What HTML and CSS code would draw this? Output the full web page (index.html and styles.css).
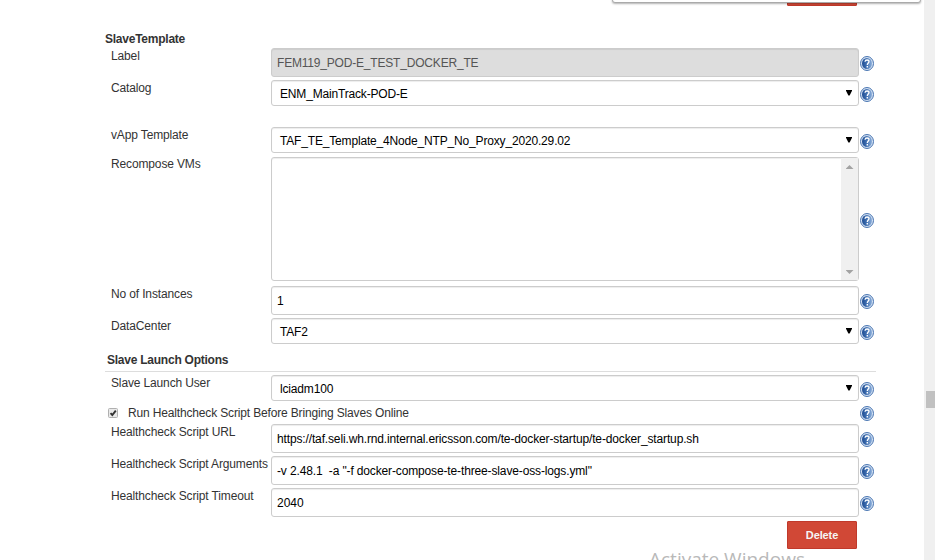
FILE: index.html
```html
<!DOCTYPE html>
<html lang="en">
<head>
<meta charset="utf-8">
<title>Slave Template</title>
<link rel="stylesheet" href="styles.css">
</head>
<body>
<svg class="defs" width="0" height="0" aria-hidden="true">
  <defs>
    <linearGradient id="disc" x1="0" y1="0" x2="1" y2="0">
      <stop offset="0" stop-color="#1d4c93"/>
      <stop offset="0.4" stop-color="#3b6bad"/>
      <stop offset="1" stop-color="#8db0dc"/>
    </linearGradient>
    <symbol id="help" viewBox="0 0 14 15">
      <ellipse cx="7" cy="7.5" rx="6.5" ry="7" fill="#d3e0f1" stroke="#4a76b2" stroke-width="1"/>
      <ellipse cx="7" cy="7.5" rx="5" ry="5.500" fill="url(#disc)"/>
      <path d="M5 5.700C5.100 4.500 5.900 4 7 4c1.200 0 2 .6 2 1.600C9 6.900 7.300 7.200 7.300 9" fill="none" stroke="#fff" stroke-width="1.300"/>
      <rect x="6.600" y="10" width="1.400" height="1.500" fill="#fff"/>
    </symbol>
  </defs>
</svg>
<div class="page">
  <main class="form">
    <button class="btn btn-prev" aria-label="Delete previous"></button>
    <h2 class="title">SlaveTemplate</h2>
    <div class="row tall"><label>Label</label><div class="field disabled">FEM119_POD-E_TEST_DOCKER_TE</div><svg class="help"><use href="#help"/></svg></div>
    <div class="row catalog"><label>Catalog</label><div class="field select"><span>ENM_MainTrack-POD-E</span><i class="arrow"></i></div><svg class="help"><use href="#help"/></svg></div>
    <div class="row vapp"><label>vApp Template</label><div class="field select"><span>TAF_TE_Template_4Node_NTP_No_Proxy_2020.29.02</span><i class="arrow"></i></div><svg class="help"><use href="#help"/></svg></div>
    <div class="row list"><label>Recompose VMs</label><div class="field listbox"><div class="track"><i class="up"></i><i class="down"></i></div></div><svg class="help"><use href="#help"/></svg></div>
    <div class="row tall"><label>No of Instances</label><div class="field">1</div><svg class="help"><use href="#help"/></svg></div>
    <div class="row"><label>DataCenter</label><div class="field select"><span>TAF2</span><i class="arrow"></i></div><svg class="help"><use href="#help"/></svg></div>
    <h2 class="section">Slave Launch Options</h2>
    <div class="row user"><label>Slave Launch User</label><div class="field select"><span>lciadm100</span><i class="arrow"></i></div><svg class="help"><use href="#help"/></svg></div>
    <div class="check-row">
      <svg class="check" viewBox="0 0 10 10"><rect x="0.500" y="0.500" width="9" height="9" rx="1" fill="#e9e9e9" stroke="#b0b0b0"/><path d="M2.500 5.200 4.300 7 7.800 2.600" fill="none" stroke="#333" stroke-width="1.900"/></svg>
      <span class="check-text">Run Healthcheck Script Before Bringing Slaves Online</span>
      <svg class="help"><use href="#help"/></svg>
    </div>
    <div class="row tall"><label>Healthcheck Script URL</label><div class="field">https://taf.seli.wh.rnd.internal.ericsson.com/te-docker-startup/te-docker_startup.sh</div><svg class="help"><use href="#help"/></svg></div>
    <div class="row tall"><label>Healthcheck Script Arguments</label><div class="field">-v 2.48.1  -a "-f docker-compose-te-three-slave-oss-logs.yml"</div><svg class="help"><use href="#help"/></svg></div>
    <div class="row tall"><label>Healthcheck Script Timeout</label><div class="field number">2040</div><svg class="help"><use href="#help"/></svg></div>
    <button class="btn">Delete</button>
  </main>
  <aside class="scrollbar"><div class="thumb"></div></aside>
  <div class="panel-edge"></div>
  <div class="watermark">Activate Windows</div>
</div>
</body>
</html>
```
FILE: styles.css
```css
* { box-sizing: border-box; }
body {
  margin: 0;
  background: #fff;
  color: #333;
  font: 12px/16px "Liberation Sans", Arial, sans-serif;
  letter-spacing: -0.14px;
}
.defs { position: absolute; }
.page {
  position: relative;
  display: flex;
  justify-content: space-between;
  width: 935px;
  height: 560px;
  overflow: hidden;
}
.form {
  display: flex;
  flex-direction: column;
  width: 771px;
  margin-left: 105px;
}
h2 { margin: 0; font-size: 12px; line-height: 16px; letter-spacing: -0.24px; }
.title { margin: 25px 0 1px; }
.section {
  height: 20px;
  margin: 5px 0 3px;
  padding-left: 2px;
  border-bottom: 1px solid #ddd;
}
.row {
  display: grid;
  grid-template-columns: 166px 588px 14px;
  height: 26px;
  margin-bottom: 3px;
}
.row label { padding-left: 6px; white-space: nowrap; }
.tall { height: 29px; }
.catalog { margin-bottom: 21px; }
.vapp { margin-bottom: 4px; }
.list { height: 124px; margin-bottom: 5px; }
.list label { line-height: 14px; }
.user { margin-bottom: 2px; }
.field {
  display: flex;
  align-items: center;
  padding: 0 5px;
  border: 1px solid #ccc;
  border-radius: 3px;
  box-shadow: inset 0 1px 1px rgba(0, 0, 0, 0.075);
  background: #fff;
  color: #000;
  white-space: pre;
}
.disabled { background: #ddd; color: #555; letter-spacing: -0.19px; }
.number { letter-spacing: 0; }
.select { justify-content: space-between; padding: 2px 6px 0 8px; letter-spacing: -0.17px; }
.arrow {
  width: 6px;
  height: 6px;
  margin-bottom: 3px;
  background: #000;
  clip-path: polygon(0 0, 100% 0, 100% 20%, 60% 100%, 40% 100%, 0 20%);
}
.listbox { justify-content: flex-end; padding: 0; }
.track {
  display: flex;
  flex-direction: column;
  justify-content: space-between;
  align-items: center;
  width: 17px;
  height: 122px;
  padding: 7px 0 6px;
  background: #f0f0f0;
}
.up, .down {
  width: 8px;
  height: 4px;
  background: #a3a3a3;
  clip-path: polygon(50% 0, 100% 100%, 0 100%);
}
.down { clip-path: polygon(0 0, 100% 0, 50% 100%); }
.help {
  align-self: center;
  width: 14px;
  height: 15px;
  margin: 2px 0 0 1px;
}
.check-row {
  display: flex;
  align-items: center;
  height: 20px;
  margin-bottom: 1px;
  padding: 0 2px 0 3px;
}
.check { width: 10px; height: 10px; margin-right: 10px; }
.check-text { flex: 1; letter-spacing: -0.155px; }
.check-row .help { margin: 0; }
.btn {
  align-self: flex-end;
  flex: none;
  width: 70px;
  height: 28px;
  margin: 1px 19px 0 0;
  padding: 0;
  border: 1px solid #c0392b;
  border-radius: 1px;
  background: #d14836;
  color: #f5f5f5;
  font: bold 11px/16px "Liberation Sans", Arial, sans-serif;
  letter-spacing: -0.1px;
}
.btn-prev { height: 6px; margin-top: 0; }
.scrollbar { width: 11px; padding: 391px 0 0 2px; background: #f0f0f0; }
.thumb { height: 17px; background: #c1c1c1; }
.panel-edge {
  position: absolute;
  top: -10px;
  left: 612px;
  width: 309px;
  height: 13px;
  border: 1px solid #aaa;
  border-radius: 3px;
  background: #fff;
  box-shadow: 0 1px 2px rgba(0, 0, 0, 0.3);
}
.watermark {
  position: absolute;
  top: 545px;
  left: 649px;
  color: #b9b9b9;
  font: 19px/28px "Open Sans", sans-serif;
  letter-spacing: 0;
  white-space: nowrap;
}
```
